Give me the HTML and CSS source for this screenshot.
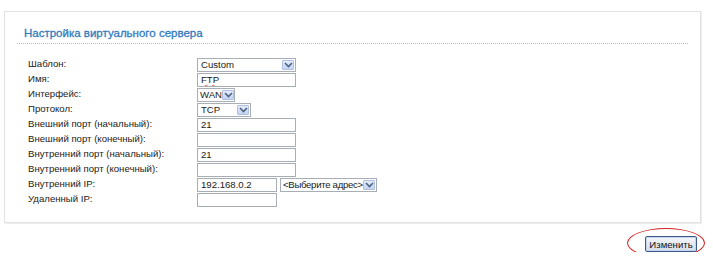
FILE: index.html
```html
<!DOCTYPE html>
<html lang="ru">
<head>
  <meta charset="UTF-8">
  <title>Настройка виртуального сервера</title>
  <link rel="stylesheet" href="styles.css">
</head>
<body>
<div class="panel">
  <h2 class="title">Настройка виртуального сервера</h2>
  <div class="form">
    <label>Шаблон:</label>
    <div class="field"><span class="select w-custom"><span class="val">Custom</span><span class="arrow"><svg width="9" height="6" viewBox="0 0 9 6"><path d="M1 1 L4.5 4.5 L8 1" fill="none" stroke="#4d6185" stroke-width="1.6"/></svg></span></span></div>

    <label>Имя:</label>
    <div class="field"><span class="input w-full"><span class="spell">FTP</span></span></div>

    <label>Интерфейс:</label>
    <div class="field"><span class="select w-wan"><span class="val">WAN</span><span class="arrow"><svg width="9" height="6" viewBox="0 0 9 6"><path d="M1 1 L4.5 4.5 L8 1" fill="none" stroke="#4d6185" stroke-width="1.6"/></svg></span></span></div>

    <label>Протокол:</label>
    <div class="field"><span class="select w-tcp"><span class="val">TCP</span><span class="arrow"><svg width="9" height="6" viewBox="0 0 9 6"><path d="M1 1 L4.5 4.5 L8 1" fill="none" stroke="#4d6185" stroke-width="1.6"/></svg></span></span></div>

    <label>Внешний порт (начальный):</label>
    <div class="field"><span class="input w-full">21</span></div>

    <label>Внешний порт (конечный):</label>
    <div class="field"><span class="input w-full"></span></div>

    <label>Внутренний порт (начальный):</label>
    <div class="field"><span class="input w-full">21</span></div>

    <label>Внутренний порт (конечный):</label>
    <div class="field"><span class="input w-full"></span></div>

    <label>Внутренний IP:</label>
    <div class="field"><span class="input w-ip">192.168.0.2</span><span class="select w-addr"><span class="val">&lt;Выберите адрес&gt;</span><span class="arrow"><svg width="9" height="6" viewBox="0 0 9 6"><path d="M1 1 L4.5 4.5 L8 1" fill="none" stroke="#4d6185" stroke-width="1.6"/></svg></span></span></div>

    <label>Удаленный IP:</label>
    <div class="field"><span class="input w-ip"></span></div>
  </div>
</div>
<div class="actions">
  <span class="btn-wrap">
    <button type="button">Изменить</button>
    <span class="mark"></span>
  </span>
</div>
</body>
</html>
```

FILE: styles.css
```css
body {
  margin: 0;
  padding: 11px 12px 0 4px;
  background: #fff;
  font-family: "Liberation Sans", Arial, sans-serif;
  font-size: 10px;
  color: #1a1a1a;
}
.panel {
  border: 1px solid #e2e2e2;
  box-shadow: 1px 1px 0 #eeeeee;
  padding: 14px 12px 15px 12px;
  height: 181px;
}
.title {
  margin: 0;
  padding: 0 0 3px 7px;
  font-size: 11.5px;
  font-weight: normal;
  -webkit-text-stroke: 0.3px #2f7bbd;
  color: #2f7bbd;
  line-height: 14px;
  border-bottom: 1px dotted #9cc6de;
}
.form {
  display: grid;
  grid-template-columns: 169px 1fr;
  grid-auto-rows: 15px;
  margin: 14px 0 0 11px;
}
.form label {
  font-size: 9.6px;
  line-height: 12px;
  color: #222;
}
.field {
  display: flex;
  gap: 3px;
  height: 14px;
}
.input, .select {
  box-sizing: border-box;
  flex: none;
  height: 14px;
  border: 1px solid #a8aeb6;
  background: #fff;
  font-size: 9.6px;
  line-height: 12px;
  padding: 0 3px;
  display: flex;
  align-items: center;
  white-space: nowrap;
  overflow: hidden;
}
.select {
  padding: 0 1px 0 3px;
  justify-content: space-between;
}
.w-addr .val { letter-spacing: -0.3px; }
.arrow {
  box-sizing: border-box;
  flex: none;
  width: 12px;
  height: 10px;
  border: 1px solid #aebfdf;
  border-radius: 1px;
  background: linear-gradient(#e4ecfb, #c3d3f1);
  display: flex;
  align-items: center;
  justify-content: center;
}
.spell {
  text-decoration: underline wavy #e06060 1px;
  text-underline-offset: 1px;
}
.w-full { width: 99px; }
.w-custom { width: 99px; }
.w-wan { width: 38px; padding-left: 2px; }
.w-tcp { width: 54px; }
.w-ip { width: 80px; }
.w-addr { width: 97px; padding-left: 2px; }
.actions {
  display: flex;
  justify-content: flex-end;
  padding: 13px 4px 0 0;
}
.btn-wrap {
  position: relative;
  display: inline-block;
}
button {
  font-family: "Liberation Sans", Arial, sans-serif;
  font-size: 9.6px;
  height: 16px;
  width: 52px;
  padding: 0;
  border: 1px solid #3a5a8c;
  border-radius: 2px;
  background: linear-gradient(#f4f6fa, #d5dde9);
  box-shadow: inset 0 0 0 1px #c8d4ea;
  color: #111;
}
.mark {
  position: absolute;
  left: -18px;
  top: -8px;
  width: 78px;
  height: 30px;
  border: 1.5px solid #d42020;
  border-radius: 50%;
  box-sizing: border-box;
}
```
